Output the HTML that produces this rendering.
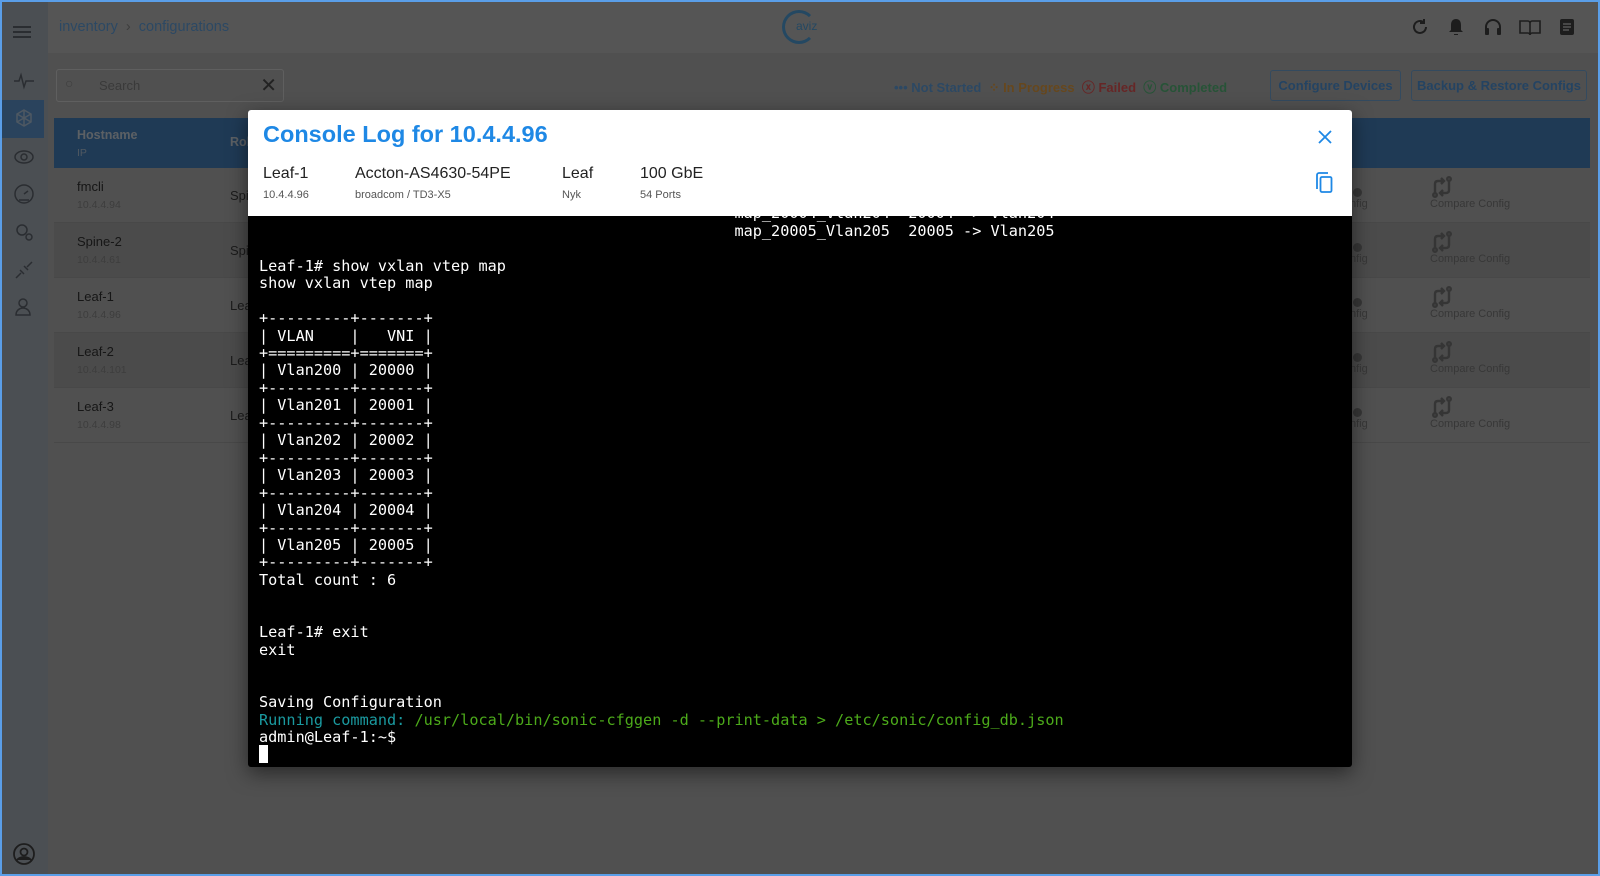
<!DOCTYPE html>
<html><head><meta charset="utf-8"><style>
*{box-sizing:border-box;margin:0;padding:0}
html,body{background:#c8c8c8}
body{width:1600px;height:876px;overflow:hidden;font-family:"Liberation Sans",sans-serif;position:relative}
.abs{position:absolute}
.frame{left:0;top:0;width:1600px;height:876px;border:2px solid #5a9ee8;z-index:20;pointer-events:none}
.side{left:0;top:0;width:48px;height:876px;background:#bcc5d0}
.top{left:48px;top:0;right:0;height:53px;background:#d5d5d5}
.ico{position:absolute;left:12px;width:24px;height:24px;stroke:#6a717b;fill:none;stroke-width:1.5}
.row{position:absolute;left:54px;width:1536px;height:55px;border-bottom:1px solid #b4b4b4}
.h{position:absolute;left:23px;top:11px;font-size:13px;color:#383838}
.ip{position:absolute;left:23px;top:31px;font-size:10.5px;color:#999}
.role{position:absolute;left:176px;top:20px;font-size:13px;color:#444}
.cc{position:absolute;left:1376px;top:30px;font-size:11px;color:#8a8a8a}
.cfg{position:absolute;left:1296px;top:30px;font-size:11px;color:#8a8a8a}
.cmp{position:absolute;left:1376px;top:7px}
.ci{position:absolute;left:1299px;top:20px;width:9px;height:9px;border-radius:50%;background:#8a8a8a}
.overlay{left:0;top:0;width:1600px;height:876px;background:rgba(0,0,0,.6);z-index:5}
.modal{left:248px;top:110px;width:1104px;height:657px;background:#000;border-radius:3px;overflow:hidden;box-shadow:0 6px 20px rgba(0,0,0,.5);z-index:10}
.mh{position:absolute;left:0;top:0;width:100%;height:106px;background:#fff;z-index:2}
pre{position:absolute;left:11px;top:95.4px;font-family:"DejaVu Sans Mono","Liberation Mono",monospace;font-size:15.2px;line-height:17.45px;color:#fff}
.btn{position:absolute;top:70px;height:31px;border:1px solid #80b8ee;border-radius:3px;color:#5aa8f5;font-size:13px;line-height:29px;text-align:center;font-weight:bold}
.ti{position:absolute;top:17px;width:20px;height:20px;fill:#4a4a4a;stroke:#4a4a4a}
</style></head><body>
<div class="abs side">
 <div style="position:absolute;left:13px;top:26px;width:18px;height:2px;background:#6a717b;box-shadow:0 5px #6a717b,0 10px #6a717b"></div>
 <svg class="ico" style="top:69px" viewBox="0 0 24 24"><path d="M2 12h5l2-6 3 12 2-6h8"/></svg>
 <div style="position:absolute;left:0;top:100px;width:44px;height:38px;background:#6aa8e8"></div>
 <svg class="ico" style="top:107px;stroke:#c2dcf5" viewBox="0 0 24 24"><path d="M12 3l7 4v8l-7 4-7-4V7z M12 3v16 M5 7l14 8 M19 7L5 15"/></svg>
 <svg class="ico" style="top:145px" viewBox="0 0 24 24"><ellipse cx="12" cy="12" rx="9" ry="6"/><circle cx="12" cy="12" r="3"/></svg>
 <svg class="ico" style="top:182px" viewBox="0 0 24 24"><circle cx="12" cy="12" r="9"/><path d="M12 12l4-3 M7 18h10"/></svg>
 <svg class="ico" style="top:220px" viewBox="0 0 24 24"><circle cx="10" cy="10" r="5"/><circle cx="17" cy="17" r="3"/></svg>
 <svg class="ico" style="top:258px" viewBox="0 0 24 24"><path d="M4 20l5-5 M20 4l-5 5 M8 12l4 4 M12 8l4 4"/></svg>
 <svg class="ico" style="top:295px" viewBox="0 0 24 24"><circle cx="11" cy="8" r="4"/><path d="M4 20c0-5 4-7 7-7s7 2 7 7z"/></svg>
 <svg class="ico" style="top:842px;stroke-width:1.8;stroke:#4a4a4a" viewBox="0 0 24 24"><circle cx="12" cy="12" r="10"/><circle cx="12" cy="10" r="3.5"/><path d="M5 18c3-4 11-4 14 0" fill="#4a4a4a"/></svg>
</div>
<div class="abs top">
 <div style="position:absolute;left:11px;top:19px;font-size:14.5px;color:#6eb5f8">inventory &nbsp;<span style="color:#999">›</span>&nbsp; configurations</div>
 <div style="position:absolute;left:734px;top:10px;width:34px;height:34px;border:3px solid #5bb3f5;border-radius:50%;border-right-color:transparent"></div>
 <div style="position:absolute;left:748px;top:19px;font-size:12px;color:#5bb3f5">aviz</div>
 <svg class="ti" style="left:1362px" viewBox="0 0 20 20"><path d="M16 10a6 6 0 1 1-2-4.5 M14 2v4h-4" fill="none" stroke-width="2"/></svg>
 <svg class="ti" style="left:1398px" viewBox="0 0 20 20"><path d="M10 2c-3 0-5 2-5 6v5l-2 2h14l-2-2V8c0-4-2-6-5-6z M8 17h4v1H8z" stroke="none"/></svg>
 <svg class="ti" style="left:1435px" viewBox="0 0 20 20"><path d="M3 15v-5a7 7 0 0 1 14 0v5" fill="none" stroke-width="2"/><rect x="2" y="11" width="4" height="7" rx="1" stroke="none"/><rect x="14" y="11" width="4" height="7" rx="1" stroke="none"/></svg>
 <svg class="ti" style="left:1471px;width:22px" viewBox="0 0 22 20"><path d="M1 4h8c1 0 2 1 2 2v12c0-1-1-2-2-2H1z M21 4h-8c-1 0-2 1-2 2v12c0-1 1-2 2-2h8z" fill="none" stroke-width="1.6"/></svg>
 <svg class="ti" style="left:1509px" viewBox="0 0 20 20"><rect x="3" y="2" width="14" height="16" rx="2" stroke="none"/><path d="M6 7h8M6 10h8M6 13h6" stroke="#d5d5d5" stroke-width="1.5"/></svg>
</div>
<div class="abs" style="left:56px;top:69px;width:228px;height:33px;border:1px solid #eee;border-radius:3px">
 <span style="position:absolute;left:42px;top:8px;font-size:13px;color:#919191">Search</span>
 <span style="position:absolute;left:8px;top:5px;font-size:14px;color:#999">○</span>
 <span style="position:absolute;right:6px;top:3px;font-size:20px;color:#555">✕</span>
</div>
<div class="abs" style="left:894px;top:77px;font-size:13px;white-space:nowrap;font-weight:bold">
 <span style="color:#6eb5f8">••• Not Started</span>&nbsp;
 <span style="color:#ffb24a">⁘ In Progress</span>&nbsp;
 <span style="color:#ff6060">ⓧ Failed</span>&nbsp;
 <span style="color:#62d08a">ⓥ Completed</span>
</div>
<div class="btn" style="left:1270px;width:131px">Configure Devices</div>
<div class="btn" style="left:1411px;width:176px">Backup &amp; Restore Configs</div>
<div class="abs" style="left:54px;top:118px;width:1536px;height:50px;background:#4e91d4">
 <div style="position:absolute;left:23px;top:10px;font-size:12.5px;color:#e6f0fb;font-weight:bold">Hostname</div>
 <div style="position:absolute;left:23px;top:29px;font-size:10.5px;color:#c6dcf2">IP</div>
 <div style="position:absolute;left:176px;top:17px;font-size:12.5px;color:#e6f0fb;font-weight:bold">Role</div>
</div>
<div class="row" style="top:168px"><div class="h">fmcli</div><div class="ip">10.4.4.94</div><div class="role">Spine</div><div class="ci"></div><div class="cfg">nfig</div><svg class="cmp" width="24" height="24" viewBox="0 0 24 24" fill="none" stroke="#858585" stroke-width="2.4"><path d="M5 19V9c0-2 1-3 3-3h5 M11 3l3 3-3 3 M19 5v10c0 2-1 3-3 3h-5 M13 21l-3-3 3-3"/><circle cx="5" cy="20" r="1.8"/><circle cx="19" cy="4" r="1.8"/></svg><div class="cc">Compare Config</div></div>
<div class="row" style="top:223px;background:#bcbcbc"><div class="h">Spine-2</div><div class="ip">10.4.4.61</div><div class="role">Spine</div><div class="ci"></div><div class="cfg">nfig</div><svg class="cmp" width="24" height="24" viewBox="0 0 24 24" fill="none" stroke="#858585" stroke-width="2.4"><path d="M5 19V9c0-2 1-3 3-3h5 M11 3l3 3-3 3 M19 5v10c0 2-1 3-3 3h-5 M13 21l-3-3 3-3"/><circle cx="5" cy="20" r="1.8"/><circle cx="19" cy="4" r="1.8"/></svg><div class="cc">Compare Config</div></div>
<div class="row" style="top:278px"><div class="h">Leaf-1</div><div class="ip">10.4.4.96</div><div class="role">Leaf</div><div class="ci"></div><div class="cfg">nfig</div><svg class="cmp" width="24" height="24" viewBox="0 0 24 24" fill="none" stroke="#858585" stroke-width="2.4"><path d="M5 19V9c0-2 1-3 3-3h5 M11 3l3 3-3 3 M19 5v10c0 2-1 3-3 3h-5 M13 21l-3-3 3-3"/><circle cx="5" cy="20" r="1.8"/><circle cx="19" cy="4" r="1.8"/></svg><div class="cc">Compare Config</div></div>
<div class="row" style="top:333px;background:#bcbcbc"><div class="h">Leaf-2</div><div class="ip">10.4.4.101</div><div class="role">Leaf</div><div class="ci"></div><div class="cfg">nfig</div><svg class="cmp" width="24" height="24" viewBox="0 0 24 24" fill="none" stroke="#858585" stroke-width="2.4"><path d="M5 19V9c0-2 1-3 3-3h5 M11 3l3 3-3 3 M19 5v10c0 2-1 3-3 3h-5 M13 21l-3-3 3-3"/><circle cx="5" cy="20" r="1.8"/><circle cx="19" cy="4" r="1.8"/></svg><div class="cc">Compare Config</div></div>
<div class="row" style="top:388px"><div class="h">Leaf-3</div><div class="ip">10.4.4.98</div><div class="role">Leaf</div><div class="ci"></div><div class="cfg">nfig</div><svg class="cmp" width="24" height="24" viewBox="0 0 24 24" fill="none" stroke="#858585" stroke-width="2.4"><path d="M5 19V9c0-2 1-3 3-3h5 M11 3l3 3-3 3 M19 5v10c0 2-1 3-3 3h-5 M13 21l-3-3 3-3"/><circle cx="5" cy="20" r="1.8"/><circle cx="19" cy="4" r="1.8"/></svg><div class="cc">Compare Config</div></div>

<div class="abs overlay"></div>
<div class="abs frame"></div>

<div class="abs modal">
 <div class="mh">
  <div style="position:absolute;left:15px;top:11px;font-size:23.5px;color:#1e88e5;font-weight:bold">Console Log for 10.4.4.96</div>
  <svg style="position:absolute;left:1069px;top:19px" width="16" height="16" viewBox="0 0 16 16"><path d="M2 2L14 14M14 2L2 14" stroke="#1e88e5" stroke-width="1.8"/></svg>
  <svg style="position:absolute;left:1065px;top:61px" width="22" height="24" viewBox="0 0 22 24"><path d="M4 18V4a2 2 0 0 1 2-2h9" stroke="#1e88e5" stroke-width="1.8" fill="none"/><rect x="7.5" y="6" width="11" height="15" rx="1.5" stroke="#1e88e5" stroke-width="1.8" fill="none"/></svg>
  <div style="position:absolute;left:15px;top:55px;font-size:16px;color:#222">Leaf-1</div>
  <div style="position:absolute;left:15px;top:79px;font-size:11px;color:#555">10.4.4.96</div>
  <div style="position:absolute;left:107px;top:55px;font-size:16px;color:#222">Accton-AS4630-54PE</div>
  <div style="position:absolute;left:107px;top:79px;font-size:11px;color:#555">broadcom / TD3-X5</div>
  <div style="position:absolute;left:314px;top:55px;font-size:16px;color:#222">Leaf</div>
  <div style="position:absolute;left:314px;top:79px;font-size:11px;color:#555">Nyk</div>
  <div style="position:absolute;left:392px;top:55px;font-size:16px;color:#222">100 GbE</div>
  <div style="position:absolute;left:392px;top:79px;font-size:11px;color:#555">54 Ports</div>
 </div>
<pre>                                                    map_20004_Vlan204  20004 -> Vlan204
                                                    map_20005_Vlan205  20005 -> Vlan205

Leaf-1# show vxlan vtep map
show vxlan vtep map

+---------+-------+
| VLAN    |   VNI |
+=========+=======+
| Vlan200 | 20000 |
+---------+-------+
| Vlan201 | 20001 |
+---------+-------+
| Vlan202 | 20002 |
+---------+-------+
| Vlan203 | 20003 |
+---------+-------+
| Vlan204 | 20004 |
+---------+-------+
| Vlan205 | 20005 |
+---------+-------+
Total count : 6


Leaf-1# exit
exit


Saving Configuration
<span style="color:#1a9aa0">Running command: </span><span style="color:#4caa1a">/usr/local/bin/sonic-cfggen -d --print-data &gt; /etc/sonic/config_db.json</span>
admin@Leaf-1:~$
<span style="background:#fff">&nbsp;</span></pre>
</div>
</body></html>
